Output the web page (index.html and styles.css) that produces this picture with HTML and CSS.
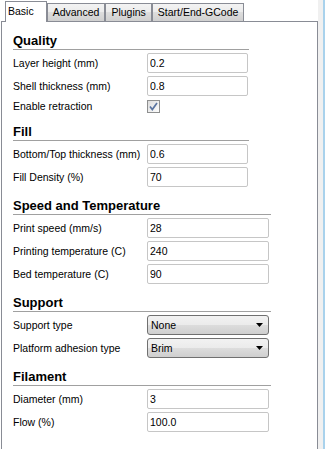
FILE: index.html
```html
<!DOCTYPE html>
<html lang="en">
<head>
  <meta charset="UTF-8">
  <title>Basic settings</title>
  <link rel="stylesheet" href="styles.css">
</head>
<body>
  <div class="window">
    <div class="notebook">
      <div class="tabs">
        <div class="tab active">Basic</div>
        <div class="tab">Advanced</div>
        <div class="tab">Plugins</div>
        <div class="tab">Start/End-GCode</div>
      </div>

      <div class="page">
        <section class="group">
          <h3>Quality</h3>
          <div class="fields">
            <div class="row"><label>Layer height (mm)</label><input class="field" value="0.2"></div>
            <div class="row"><label>Shell thickness (mm)</label><input class="field" value="0.8"></div>
            <div class="row check-row">
              <label>Enable retraction</label>
              <span class="checkbox">
                <svg width="11" height="11" viewBox="0 0 11 11"><path d="M2 5.5 L4.3 8.5 L9 2" fill="none" stroke="#5a74a0" stroke-width="1.7"/></svg>
              </span>
            </div>
          </div>
        </section>

        <section class="group">
          <h3>Fill</h3>
          <div class="fields">
            <div class="row"><label>Bottom/Top thickness (mm)</label><input class="field" value="0.6"></div>
            <div class="row"><label>Fill Density (%)</label><input class="field" value="70"></div>
          </div>
        </section>

        <section class="group wide">
          <h3>Speed and Temperature</h3>
          <div class="fields">
            <div class="row"><label>Print speed (mm/s)</label><input class="field" value="28"></div>
            <div class="row"><label>Printing temperature (C)</label><input class="field" value="240"></div>
            <div class="row"><label>Bed temperature (C)</label><input class="field" value="90"></div>
          </div>
        </section>

        <section class="group wide">
          <h3>Support</h3>
          <div class="fields">
            <div class="row">
              <label>Support type</label>
              <div class="field combo"><span>None</span><svg width="7" height="4" viewBox="0 0 7 4"><path d="M0 0 H7 L3.5 4 Z" fill="#000"/></svg></div>
            </div>
            <div class="row">
              <label>Platform adhesion type</label>
              <div class="field combo"><span>Brim</span><svg width="7" height="4" viewBox="0 0 7 4"><path d="M0 0 H7 L3.5 4 Z" fill="#000"/></svg></div>
            </div>
          </div>
        </section>

        <section class="group wide">
          <h3>Filament</h3>
          <div class="fields">
            <div class="row"><label>Diameter (mm)</label><input class="field" value="3"></div>
            <div class="row"><label>Flow (%)</label><input class="field" value="100.0"></div>
          </div>
        </section>
      </div>
    </div>
    <div class="frame-edge"></div>
  </div>
</body>
</html>
```

FILE: styles.css
```css
:root {
  --tab-border: #898c95;
  --input-border: #c6c6c6;
  --rule-color: #a0a0a0;
  --text-color: #000;
}
body {
  margin: 0;
  font-family: "Liberation Sans", Arial, sans-serif;
  font-size: 10.5px;
  color: var(--text-color);
  background-color: #fff;
}
.window {
  display: flex;
  height: 449px;
  overflow: hidden;
}
.notebook {
  width: 318px;
  display: flex;
  flex-direction: column;
}
.tabs {
  display: flex;
  align-items: flex-end;
  height: 21px;
  padding-left: 5px;
}
.tab {
  height: 17px;
  line-height: 17px;
  padding: 0 5px;
  border: 1px solid var(--tab-border);
  border-bottom: none;
  background: linear-gradient(#f3f3f3, #ebebeb 50%, #dddddd 50%, #d0d0d0);
  white-space: nowrap;
}
.tab.active {
  position: relative;
  z-index: 1;
  height: 18px;
  line-height: 18px;
  padding: 0 12px 2px 2px;
  margin-bottom: -1px;
  background: #fff;
}
.page {
  flex: 1;
  margin-left: 1px;
  border: 1px solid var(--tab-border);
  border-bottom: none;
  background-color: #fff;
  padding: 10px 0 0 11px;
}
.frame-edge {
  width: 5px;
  background-color: #f0f0f0;
  border-right: 2px solid #a9d2ec;
}
.group {
  width: 236px;
  margin-top: 10px;
}
.group:first-child {
  margin-top: 0;
}
.group.wide {
  width: 258px;
}
.group h3 {
  margin: 0 0 3px;
  font-size: 13px;
  font-weight: bold;
  line-height: 17px;
  border-bottom: 1px solid var(--rule-color);
}
.fields {
  display: flex;
  flex-direction: column;
  gap: 3px;
}
.row {
  display: flex;
  align-items: center;
  height: 20px;
}
.row label {
  width: 134px;
  flex-shrink: 0;
}
.row.check-row {
  height: 14px;
}
.field {
  box-sizing: border-box;
  width: 101px;
  height: 20px;
  margin: 0;
  padding: 0 2px;
  border: 1px solid var(--input-border);
  border-radius: 2px;
  font: inherit;
  color: var(--text-color);
  background-color: #fff;
}
.wide .field {
  width: 122px;
}
.combo {
  display: flex;
  align-items: center;
  justify-content: space-between;
  padding: 0 5px 0 3px;
  border-color: #707070;
  border-radius: 3px;
  background: linear-gradient(#f2f2f2, #ebebeb 50%, #dddddd 50%, #cfcfcf);
}
.checkbox {
  box-sizing: border-box;
  display: flex;
  align-items: center;
  justify-content: center;
  width: 13px;
  height: 13px;
  border: 1px solid #8e8f8f;
  background: linear-gradient(135deg, #dcdcdc, #fdfdfd);
}
```
